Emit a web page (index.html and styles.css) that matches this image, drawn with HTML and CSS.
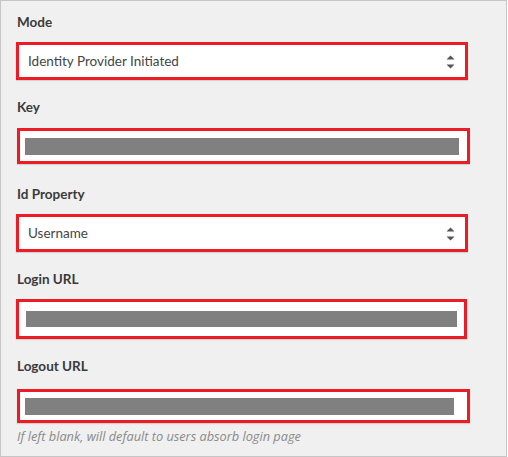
FILE: index.html
```html
<!DOCTYPE html>
<html>
<head>
<meta charset="utf-8">
<link rel="stylesheet" href="styles.css">
</head>
<body>
<div class="panel">
  <div class="field">
    <div class="label">Mode</div>
    <div class="box box-mode select">
      <span class="value">Identity Provider Initiated</span>
      <svg class="arrows" width="9" height="14" viewBox="0 0 9 14"><path d="M4.5 0.5 L8.5 4.5 L0.5 4.5 Z" fill="#555"/><path d="M0.5 9.5 L8.5 9.5 L4.5 13.5 Z" fill="#555"/></svg>
    </div>
  </div>
  <div class="field field-key">
    <div class="label">Key</div>
    <div class="box box-key"><div class="bar bar-key"></div></div>
  </div>
  <div class="field field-id">
    <div class="label">Id Property</div>
    <div class="box box-id select">
      <span class="value">Username</span>
      <svg class="arrows" width="9" height="14" viewBox="0 0 9 14"><path d="M4.5 0.5 L8.5 4.5 L0.5 4.5 Z" fill="#555"/><path d="M0.5 9.5 L8.5 9.5 L4.5 13.5 Z" fill="#555"/></svg>
    </div>
  </div>
  <div class="field field-login">
    <div class="label">Login URL</div>
    <div class="box box-login"><div class="bar bar-login"></div></div>
  </div>
  <div class="field field-logout">
    <div class="label">Logout URL</div>
    <div class="box box-logout"><div class="bar bar-logout"></div></div>
  </div>
  <div class="help">If left blank, will default to users absorb login page</div>
</div>
</body>
</html>
```
FILE: styles.css
```css
html, body {
  margin: 0;
  padding: 0;
  background: #ffffff;
}
.panel {
  box-sizing: border-box;
  width: 507px;
  height: 457px;
  border: 1px solid #c6c6c6;
  background: #f0f0f0;
  padding: 13px 0 0 16px;
  font-family: Lato, "Liberation Sans", sans-serif;
}
.label {
  font-size: 13.5px;
  line-height: 16px;
  font-weight: bold;
  color: #3a3a3a;
}
.box {
  box-sizing: border-box;
  border: 3px solid #ed1c24;
  background: #ffffff;
  display: flex;
  align-items: center;
  box-shadow: 0 1px 1px rgba(0,0,0,0.12);
}
.select {
  justify-content: space-between;
  padding: 0 10px 0 9px;
}
.value {
  font-size: 13.5px;
  color: #454545;
}
.arrows {
  display: block;
  margin-top: 1px;
}
.bar {
  height: 17px;
  background: #808080;
}
.field-key .label { margin-top: 19px; }
.field-id .label { margin-top: 22px; }
.field-login .label { margin-top: 19px; }
.field-logout .label { margin-top: 19px; }

.box-mode { margin: 12px 0 0 -1px; width: 452px; height: 38px; }
.box-key { margin-top: 13px; width: 453px; height: 36px; }
.box-id { margin: 12px 0 0 -1px; width: 452px; height: 38px; }
.box-login { margin: 12px 0 0 -1px; width: 451px; height: 40px; }
.box-logout { margin-top: 15px; width: 453px; height: 34px; }

.bar-key { margin-left: 5px; width: 434px; }
.bar-login { margin-left: 7px; width: 431px; height: 16px; }
.bar-logout { margin-left: 5px; width: 429px; }

.help {
  margin-top: 5px;
  font-family: "Open Sans", Lato, sans-serif;
  font-size: 12.75px;
  line-height: 16px;
  font-style: italic;
  color: #8a8a8a;
}
```
